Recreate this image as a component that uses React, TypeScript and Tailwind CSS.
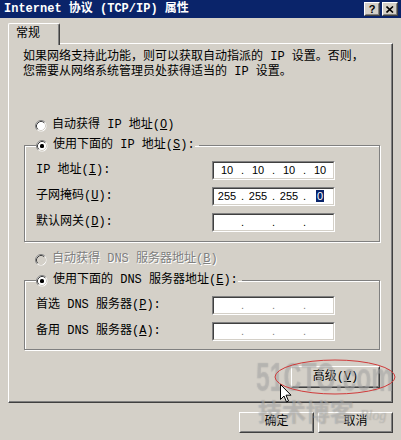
import type { ReactNode } from 'react'

const ui = "font-['Liberation_Mono','Noto_Sans_CJK_SC',monospace]"

function Radio({ checked, disabled }: { checked?: boolean; disabled?: boolean }) {
  return (
    <svg width="12" height="12" viewBox="0 0 12 12" className="shrink-0">
      <circle cx="6" cy="6" r="5.5" fill="#fff" />
      <circle cx="6" cy="6" r="4.5" fill={disabled ? '#d4d0c8' : '#fff'} />
      <path d="M2.11 9.89 A5.5 5.5 0 0 1 9.89 2.11" fill="none" stroke="#808080" />
      <path d="M2.82 9.18 A4.5 4.5 0 0 1 9.18 2.82" fill="none" stroke="#404040" />
      <path d="M9.18 2.82 A4.5 4.5 0 0 1 2.82 9.18" fill="none" stroke="#d4d0c8" />
      {checked && <rect x="4" y="4" width="4" height="4" rx="1.5" fill="#000" />}
    </svg>
  )
}

function Btn({ children, className = '' }: { children: ReactNode; className?: string }) {
  return (
    <div className={`border border-t-white border-l-white border-r-[#404040] border-b-[#404040] bg-[#d4d0c8] ${className}`}>
      <div className="flex h-full w-full items-center justify-center border border-t-[#d4d0c8] border-l-[#d4d0c8] border-r-[#808080] border-b-[#808080]">
        {children}
      </div>
    </div>
  )
}

function IpField({ parts, selectLast, dim }: { parts: string[]; selectLast?: boolean; dim?: boolean }) {
  return (
    <div className="h-[19px] w-[123px] border border-t-[#808080] border-l-[#808080] border-r-white border-b-white">
      <div className="flex h-full items-center border border-t-[#404040] border-l-[#404040] border-r-[#d4d0c8] border-b-[#d4d0c8] bg-white pl-px font-['Liberation_Sans',sans-serif] text-[11px] leading-[13px]">
        {parts.map((p, i) => (
          <div key={i} className="flex items-center">
            {i > 0 && <span className={`w-[7px] text-center ${dim ? 'text-[#808080]' : ''}`}>.</span>}
            <span className="w-[24px] text-center">
              {selectLast && i === 3 ? <span className="bg-[#0a246a] px-px text-white">{p}</span> : p}
            </span>
          </div>
        ))}
      </div>
    </div>
  )
}

function Row({ label, children }: { label: ReactNode; children: ReactNode }) {
  return (
    <div className="flex items-center">
      <span className="w-[176px]">{label}</span>
      {children}
    </div>
  )
}

const fieldset =
  'w-[356px] border border-[#808080] px-[11px] shadow-[1px_1px_0_#fff,inset_1px_1px_0_#fff]'

export default function App() {
  return (
    <div className={`relative h-[440px] w-[401px] overflow-hidden bg-[#d4d0c8] text-[12px] leading-[15px] text-black ${ui}`}>
      {/* title bar */}
      <div className="flex h-[18px] items-center justify-between bg-[#0a246a] pl-[4px] pr-[3px]">
        <span className="font-bold text-white">Internet 协议 (TCP/IP) 属性</span>
        <div className="flex gap-[2px]">
          <Btn className="h-[14px] w-[16px]">
            <span className="font-['Liberation_Sans',sans-serif] text-[11px] font-bold leading-none">?</span>
          </Btn>
          <Btn className="h-[14px] w-[16px]">
            <svg width="8" height="7" viewBox="0 0 8 7">
              <path d="M0.5 0.5 L7 6.5 M7 0.5 L0.5 6.5" stroke="#000" strokeWidth="1.6" />
            </svg>
          </Btn>
        </div>
      </div>

      <div className="px-[8px] pt-[5px]">
        {/* tab */}
        <div className="relative z-10 -mb-[2px] flex h-[22px] w-[52px] rounded-t-[2px] border-l border-t border-r border-l-white border-t-white border-r-[#404040] bg-[#d4d0c8] pl-[7px] pt-[3px] shadow-[inset_-1px_0_0_#808080]">
          常规
        </div>

        {/* panel */}
        <div className="h-[360px] border border-t-white border-l-white border-r-[#404040] border-b-[#404040] pl-[15px] pt-[6px] shadow-[inset_-1px_-1px_0_#808080]">
          <p className="-ml-px">
            <span className="block">如果网络支持此功能，则可以获取自动指派的 IP 设置。否则，</span>
            <span className="block">您需要从网络系统管理员处获得适当的 IP 设置。</span>
          </p>

          <div className="ml-[11px] mt-[38px] flex h-[15px] items-center gap-[5px]">
            <Radio />
            <span>
              自动获得 IP 地址(<u>O</u>)
            </span>
          </div>

          <fieldset className={`mt-[5px] pb-[9px] ${fieldset}`}>
            <legend className="pr-[4px]">
              <span className="flex items-center gap-[5px] bg-[#d4d0c8]">
                <Radio checked />
                <span>
                  使用下面的 IP 地址(<u>S</u>):
                </span>
              </span>
            </legend>
            <div className="flex flex-col gap-[7px] pt-[8px]">
              <Row label={<>IP 地址(<u>I</u>):</>}>
                <IpField parts={['10', '10', '10', '10']} />
              </Row>
              <Row label={<>子网掩码(<u>U</u>):</>}>
                <IpField parts={['255', '255', '255', '0']} selectLast />
              </Row>
              <Row label={<>默认网关(<u>D</u>):</>}>
                <IpField parts={['', '', '', '']} />
              </Row>
            </div>
          </fieldset>

          <div className="ml-[11px] mt-[10px] flex h-[15px] items-center gap-[5px] text-[#808080] [text-shadow:1px_1px_0_#fff]">
            <Radio disabled />
            <span>
              自动获得 DNS 服务器地址(<u>B</u>)
            </span>
          </div>

          <fieldset className={`mt-[6px] pb-[8px] ${fieldset}`}>
            <legend className="pr-[4px]">
              <span className="flex items-center gap-[5px] bg-[#d4d0c8]">
                <Radio checked />
                <span>
                  使用下面的 DNS 服务器地址(<u>E</u>):
                </span>
              </span>
            </legend>
            <div className="flex flex-col gap-[7px] pt-[8px]">
              <Row label={<>首选 DNS 服务器(<u>P</u>):</>}>
                <IpField parts={['', '', '', '']} dim />
              </Row>
              <Row label={<>备用 DNS 服务器(<u>A</u>):</>}>
                <IpField parts={['', '', '', '']} dim />
              </Row>
            </div>
          </fieldset>

          <div className="mt-[16px] flex w-[356px] justify-end">
            <Btn className="h-[22px] w-[89px]">
              <span>
                高级(<u>V</u>)
              </span>
            </Btn>
          </div>
        </div>

        {/* dialog buttons */}
        <div className="mt-[9px] flex justify-end gap-[4px]">
          <Btn className="h-[21px] w-[75px]">确定</Btn>
          <Btn className="h-[21px] w-[75px]">取消</Btn>
        </div>
      </div>

      {/* watermark */}
      <div className="pointer-events-none absolute left-[256px] top-[357px] origin-left scale-x-[0.62] font-['Liberation_Sans',sans-serif] text-[40px] font-bold leading-none text-white/25 [text-shadow:0_0_1px_rgba(90,90,90,0.45)]">
        51CTO.com
      </div>
      <div className="pointer-events-none absolute left-[258px] top-[399px] flex items-end gap-[6px] text-white/25 [text-shadow:0_0_1px_rgba(90,90,90,0.45)]">
        <span className="font-['Noto_Sans_CJK_SC',sans-serif] text-[24px] font-bold leading-none">技术博客</span>
        <span className="font-['Liberation_Serif',serif] text-[14px] italic leading-none">Blog</span>
      </div>

      {/* red ellipse marking */}
      <svg className="pointer-events-none absolute left-[273px] top-[357px]" width="124" height="40" viewBox="0 0 124 40">
        <ellipse cx="62" cy="20" rx="60" ry="17" fill="none" stroke="#d03a3a" strokeWidth="1" />
      </svg>

      {/* mouse cursor */}
      <svg className="pointer-events-none absolute left-[280px] top-[384px]" width="12" height="19" viewBox="0 0 12 19">
        <path d="M0.5 0.5 L0.5 15.5 L4 12 L6.5 18 L8.5 17 L6 11.2 L11 11.2 Z" fill="#fff" stroke="#000" strokeWidth="1" strokeLinejoin="miter" />
      </svg>
    </div>
  )
}
